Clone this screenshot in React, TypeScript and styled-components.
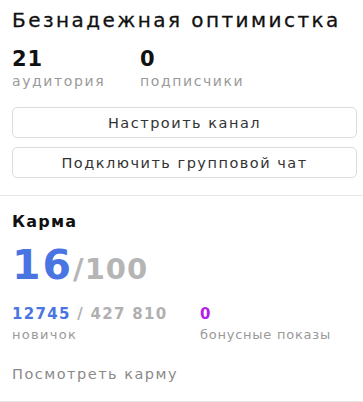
import React from "react";
import styled, { createGlobalStyle } from "styled-components";

const Global = createGlobalStyle`
  html, body { margin: 0; padding: 0; background: #fff; }
  body { font-family: "DejaVu Sans", "Noto Sans", sans-serif; color: #000; }
`;

const Page = styled.div`
  width: 363px;
  height: 402px;
  box-sizing: border-box;
  overflow: hidden;
  background: #fff;
  display: flex;
  flex-direction: column;
`;

const Section = styled.section`
  padding: 0 6px 0 12px;
  border-bottom: 1px solid #e6e6e6;
`;

const Title = styled.h1`
  margin: 0;
  padding-top: 8px;
  font-size: 20px;
  font-weight: 400;
  line-height: 24px;
  letter-spacing: 2.45px;
  color: #111;
  white-space: nowrap;
  -webkit-text-stroke: 0.3px #111;
`;

const Stats = styled.div`
  display: flex;
  margin-top: 15px;
`;

const Stat = styled.div<{ $w: number }>`
  width: ${(p) => p.$w}px;
  display: flex;
  flex-direction: column;
`;

const StatValue = styled.div`
  font-size: 21px;
  font-weight: 700;
  line-height: 24px;
  letter-spacing: 1px;
  color: #111;
`;

const StatLabel = styled.div`
  font-size: 14px;
  line-height: 19px;
  margin-top: 1px;
  letter-spacing: 1.6px;
  color: #9a9a9a;
`;

const Buttons = styled.div`
  display: flex;
  flex-direction: column;
  gap: 9px;
  margin-top: 16px;
  padding-bottom: 17px;
`;

const Button = styled.button`
  height: 31px;
  box-sizing: border-box;
  border: 1px solid #dcdcdc;
  border-radius: 5px;
  background: #fff;
  font-family: inherit;
  font-size: 14.5px;
  letter-spacing: 1.5px;
  color: #333;
  padding: 0;
`;

const KarmaSection = styled.section`
  padding: 0 12px;
  flex: 1;
  display: flex;
  flex-direction: column;
  border-bottom: 1px solid #e6e6e6;
`;

const KarmaTitle = styled.h2`
  margin: 17px 0 0;
  font-size: 16px;
  font-weight: 700;
  line-height: 18px;
  letter-spacing: 1.2px;
  color: #111;
`;

const Score = styled.div`
  margin-top: 14px;
  display: flex;
  align-items: baseline;
  line-height: 40px;
`;

const ScoreMain = styled.span`
  font-size: 41px;
  font-weight: 700;
  letter-spacing: 2px;
  color: #4a74e2;
`;

const ScoreMax = styled.span`
  font-size: 29px;
  font-weight: 700;
  letter-spacing: 1px;
  color: #b5b5b5;
`;

const Metrics = styled.div`
  display: flex;
  margin-top: 16px;
`;

const Metric = styled.div<{ $w: number }>`
  width: ${(p) => p.$w}px;
  display: flex;
  flex-direction: column;
`;

const MetricValue = styled.div<{ $color: string }>`
  font-size: 15px;
  font-weight: 700;
  line-height: 18px;
  letter-spacing: 1.3px;
  color: ${(p) => p.$color};
`;

const Muted = styled.span`
  color: #b0b0b0;
`;

const MetricLabel = styled.div`
  font-size: 13px;
  line-height: 16px;
  margin-top: 4px;
  letter-spacing: 1.3px;
  color: #9a9a9a;
`;

const BonusLabel = styled(MetricLabel)`
  letter-spacing: 0.75px;
`;

const Link = styled.a`
  margin-top: 23px;
  font-size: 14.5px;
  letter-spacing: 1.5px;
  color: #8a8a8a;
  text-decoration: none;
`;

export default function App() {
  return (
    <Page>
      <Global />
      <Section>
        <Title>Безнадежная оптимистка</Title>
        <Stats>
          <Stat $w={128}>
            <StatValue>21</StatValue>
            <StatLabel>аудитория</StatLabel>
          </Stat>
          <Stat $w={120}>
            <StatValue>0</StatValue>
            <StatLabel>подписчики</StatLabel>
          </Stat>
        </Stats>
        <Buttons>
          <Button>Настроить канал</Button>
          <Button>Подключить групповой чат</Button>
        </Buttons>
      </Section>
      <KarmaSection>
        <KarmaTitle>Карма</KarmaTitle>
        <Score>
          <ScoreMain>16</ScoreMain>
          <ScoreMax>/100</ScoreMax>
        </Score>
        <Metrics>
          <Metric $w={188}>
            <MetricValue $color="#4a74e2">
              12745 <Muted>/ 427 810</Muted>
            </MetricValue>
            <MetricLabel>новичок</MetricLabel>
          </Metric>
          <Metric $w={150}>
            <MetricValue $color="#b51ee8">0</MetricValue>
            <BonusLabel>бонусные показы</BonusLabel>
          </Metric>
        </Metrics>
        <Link>Посмотреть карму</Link>
      </KarmaSection>
    </Page>
  );
}
